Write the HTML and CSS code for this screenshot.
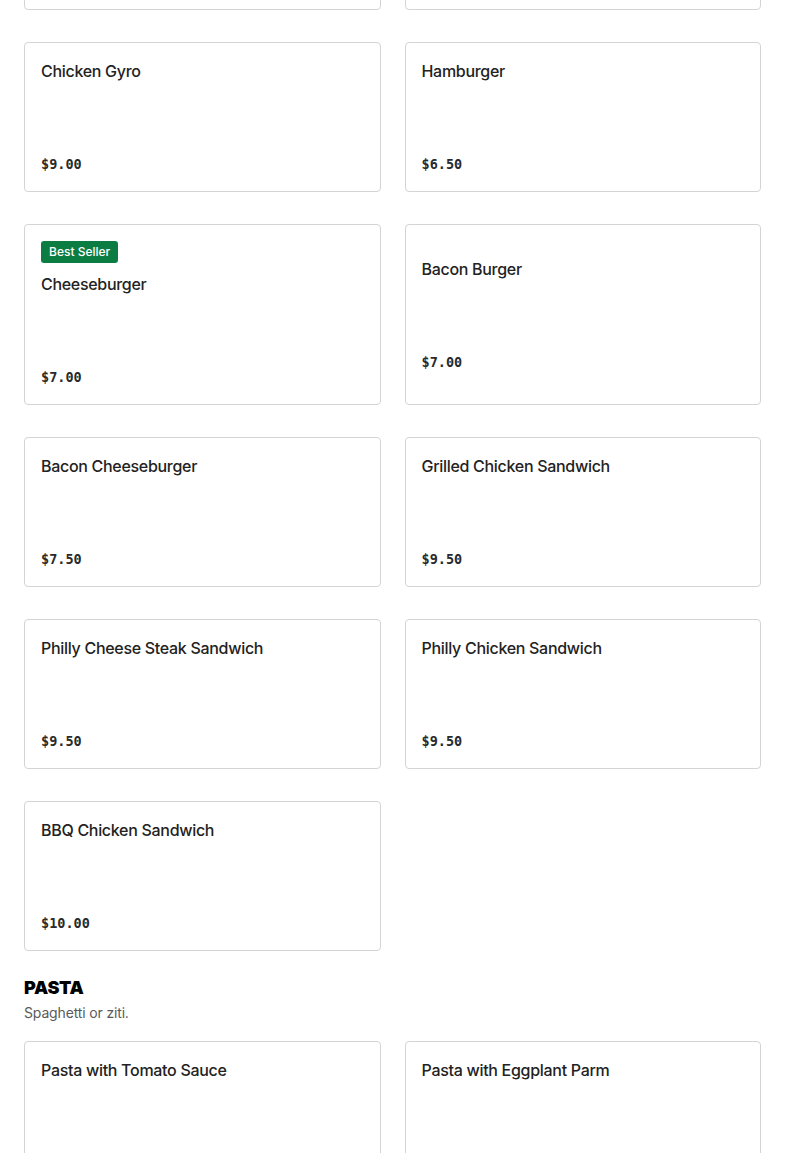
FILE: index.html
```html
<!DOCTYPE html>
<html>
<head>
<meta http-equiv="Content-Type" content="text/html; charset=UTF-8">
<title>Menu</title>
<link rel="stylesheet" href="styles.css">
</head>
<body>
<div class="menu">
  <div class="item-grid first-grid">
    <!-- cards scrolled above the top edge -->
    <div class="item-card"></div>
    <div class="item-card"></div>
    <div class="item-card">
      <div class="item-name">Chicken Gyro</div>
      <div class="item-price">$9.00</div>
    </div>
    <div class="item-card">
      <div class="item-name">Hamburger</div>
      <div class="item-price">$6.50</div>
    </div>
    <div class="item-card">
      <span class="badge">Best Seller</span>
      <div class="item-name">Cheeseburger</div>
      <div class="item-price">$7.00</div>
    </div>
    <div class="item-card">
      <div class="item-name">Bacon Burger</div>
      <div class="item-price">$7.00</div>
    </div>
    <div class="item-card">
      <div class="item-name">Bacon Cheeseburger</div>
      <div class="item-price">$7.50</div>
    </div>
    <div class="item-card">
      <div class="item-name">Grilled Chicken Sandwich</div>
      <div class="item-price">$9.50</div>
    </div>
    <div class="item-card">
      <div class="item-name">Philly Cheese Steak Sandwich</div>
      <div class="item-price">$9.50</div>
    </div>
    <div class="item-card">
      <div class="item-name">Philly Chicken Sandwich</div>
      <div class="item-price">$9.50</div>
    </div>
    <div class="item-card">
      <div class="item-name">BBQ Chicken Sandwich</div>
      <div class="item-price">$10.00</div>
    </div>
  </div>

  <div class="section-head">
    <h2 class="section-title">PASTA</h2>
    <p class="section-desc">Spaghetti or ziti.</p>
  </div>

  <div class="item-grid">
    <div class="item-card">
      <div class="item-name">Pasta with Tomato Sauce</div>
      <div class="item-price">$8.00</div>
    </div>
    <div class="item-card">
      <div class="item-name">Pasta with Eggplant Parm</div>
      <div class="item-price">$11.00</div>
    </div>
  </div>
</div>
</body>
</html>
```

FILE: styles.css
```css
body {
  margin: 0;
  font-family: Inter, "Noto Sans", sans-serif;
  background-color: #fff;
  color: #1f1f1f;
  overflow: hidden;
}
.menu {
  padding: 0 24px;
}
.item-grid {
  display: grid;
  grid-template-columns: 1fr 1fr;
  column-gap: 24px;
  row-gap: 32px;
}
.first-grid {
  margin-top: -140px;
}
.item-card {
  border: 1px solid #d4d4d4;
  border-radius: 4px;
  padding: 16px;
  display: flex;
  flex-direction: column;
  justify-content: center;
  min-height: 116px;
}
.badge {
  align-self: flex-start;
  background-color: #0b7d43;
  color: #fff;
  font-size: 12px;
  font-weight: 500;
  line-height: 22px;
  padding: 0 8px;
  border-radius: 3px;
  margin-bottom: 9px;
}
.item-name {
  font-size: 16px;
  font-weight: 500;
  line-height: 24px;
  letter-spacing: -0.3px;
  color: #222;
  margin-bottom: 70px;
}
.item-price {
  font-family: "DejaVu Sans Mono", "Liberation Mono", monospace;
  font-size: 13.5px;
  font-weight: bold;
  line-height: 22px;
  color: #2a2a2a;
}
.section-head {
  padding: 24px 0 18px;
}
.section-title {
  margin: 0;
  font-size: 18px;
  font-weight: 900;
  line-height: 26px;
  color: #000;
  letter-spacing: -0.3px;
}
.section-desc {
  margin: 2px 0 0;
  font-size: 14px;
  letter-spacing: -0.15px;
  color: #5a5a5a;
  line-height: 20px;
}
```
